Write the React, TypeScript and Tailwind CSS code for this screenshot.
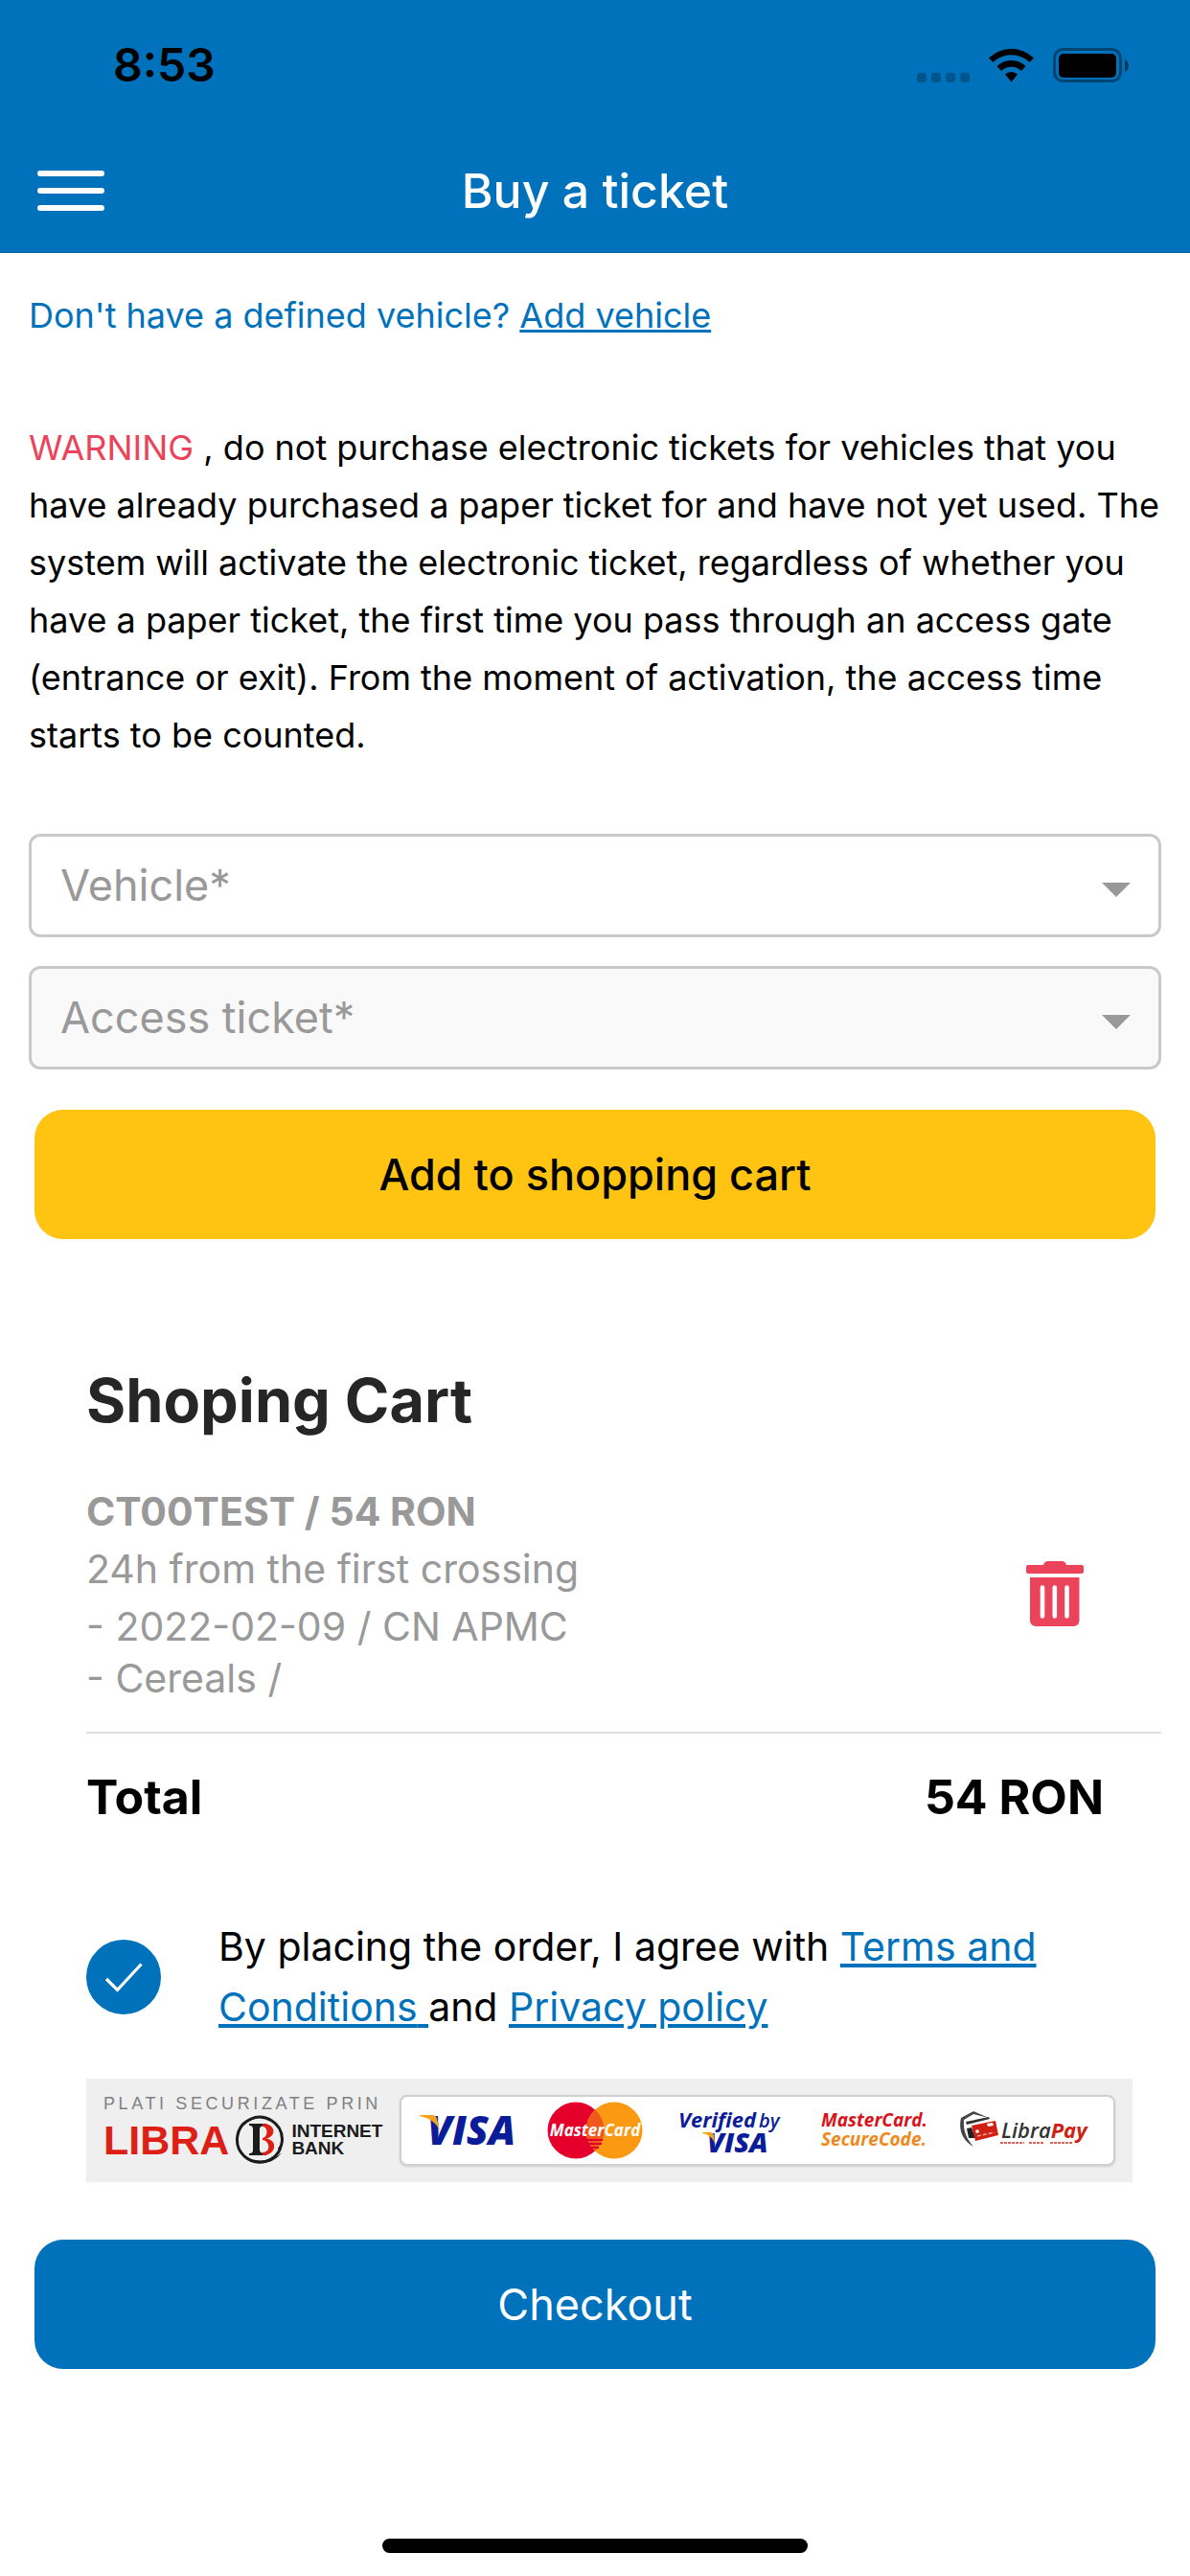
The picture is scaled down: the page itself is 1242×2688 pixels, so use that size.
import { useState } from "react"

interface CartItem {
  id: number
  plate: string
  price: number
  validity: string
  details: string[]
}

const initialItems: CartItem[] = [
  {
    id: 1,
    plate: "CT00TEST",
    price: 54,
    validity: "24h from the first crossing",
    details: ["- 2022-02-09 / CN APMC", "- Cereals /"],
  },
]

function StatusIcons() {
  return (
    <svg width="222" height="36" viewBox="0 0 222 36" aria-hidden="true">
      <g fill="#000" opacity="0.25">
        <rect x="0" y="26" width="10" height="10" rx="3" />
        <rect x="15" y="26" width="10" height="10" rx="3" />
        <rect x="30" y="26" width="10" height="10" rx="3" />
        <rect x="45" y="26" width="10" height="10" rx="3" />
      </g>
      {/* wifi */}
      <path d="M75 10.500A34 34 0 0 1 122 10.500L117.500 15A27 27 0 0 0 79.500 15Z" />
      <path d="M83.500 19A21.500 21.500 0 0 1 113.500 19L109 24A15 15 0 0 0 88 24Z" />
      <path d="M92 27.500A9.500 9.500 0 0 1 105 27.500L98.500 35.500Z" />
      {/* battery */}
      <rect x="143.500" y="1.500" width="69" height="33" rx="9" fill="none" stroke="#000" strokeOpacity="0.4" strokeWidth="3" />
      <rect x="148" y="6" width="60" height="25" rx="5" />
      <path d="M217 12C222 14 222 23 217 25Z" fillOpacity="0.5" />
    </svg>
  )
}

function SelectField({ id, label, disabled = false }: { id: string; label: string; disabled?: boolean }) {
  return (
    <div className="relative">
      <select
        id={id}
        aria-label={label}
        disabled={disabled}
        className="block w-full h-[108px] appearance-none rounded-xl border-3 border-[#c9c9c9] bg-white pl-[30px] pr-20 text-[45px] text-[#999] opacity-100 disabled:bg-[#f9f9f9]"
      >
        <option>{label}</option>
      </select>
      <div className="pointer-events-none absolute inset-y-0 right-8 flex items-center pt-2">
        <svg width="30" height="15" viewBox="0 0 30 15" aria-hidden="true">
          <path d="M0 0H30L15 15Z" fill="#999" />
        </svg>
      </div>
    </div>
  )
}

function TrashIcon() {
  return (
    <svg width="60" height="68" viewBox="0 0 60 68" aria-hidden="true">
      <path
        d="M2 4H18C19 1 20.500 0 22.500 0H37.500C39.500 0 41 1 42 4H58Q60 4 60 6V11Q60 13 58 13H2Q0 13 0 11V6Q0 4 2 4Z"
        fill="#eb445a"
      />
      <path d="M4 17H55.500V61.500Q55.500 68 49 68H10.500Q4 68 4 61.500Z" fill="#eb445a" />
      <path d="M17 27.500V57.500M29.800 27.500V57.500M42.500 27.500V57.500" stroke="#fff" strokeWidth="4.600" strokeLinecap="round" />
    </svg>
  )
}

function LibraEmblem() {
  return (
    <svg width="53" height="56" viewBox="0 0 53 56" aria-hidden="true">
      <path d="M48 36A23.500 23.500 0 1 1 49.500 27C49.500 31 48.500 35 46 38" fill="none" stroke="#1b1b1b" strokeWidth="3" />
      <path d="M11 46C22 56 40 54 49 41C40 50 25 52 11 46Z" fill="#1b1b1b" />
      <path d="M15 11H33V13C28 13 26 14 26 17V38C26 41 28 42 33 42V44H15V42C18 42 19 41 19 38V17C19 14 18 13 15 13Z" fill="#1b1b1b" />
      <path d="M29 11C44 11 43 25 33 26.500C45 28 44 44 29 44V41C38 41 37 29 29 28V26C35 25 35 14 29 14Z" fill="#dd1f16" />
    </svg>
  )
}

function VisaLogo() {
  return (
    <svg width="100" height="60" viewBox="0 0 100 60" role="img" aria-label="Visa">
      <text x="8" y="45" fontSize="42" fontWeight="800" fontStyle="italic" fill="#0a1c98" fontFamily="Open Sans, sans-serif">
        VISA
      </text>
      <path d="M0 14H13Q17 14 18 18L21 30C17 22 10 17 0 15Z" fill="#f6a21c" />
    </svg>
  )
}

function MasterCardLogo() {
  return (
    <svg width="100" height="60" viewBox="0 0 100 60" role="img" aria-label="MasterCard">
      <circle cx="30" cy="30" r="29.500" fill="#e4002b" />
      <circle cx="70" cy="30" r="29.500" fill="#fb9a12" />
      <path d="M50 8.300A29.500 29.500 0 0 1 50 51.700A29.500 29.500 0 0 1 50 8.300Z" fill="#ee5a1c" />
      <path d="M42 40H58M43 44H57M46 48H54" stroke="#e4002b" strokeWidth="2" />
      <text
        x="50"
        y="36"
        textAnchor="middle"
        fontSize="17"
        fontWeight="700"
        fontStyle="italic"
        fill="#fff"
        fontFamily="Open Sans, sans-serif"
      >
        MasterCard
      </text>
    </svg>
  )
}

function VerifiedByVisaLogo() {
  return (
    <svg width="112" height="68" viewBox="-4 -4 112 68" role="img" aria-label="Verified by Visa">
      <g fill="#0a1c98" fontStyle="italic" fontFamily="Open Sans, sans-serif">
        <text x="0" y="27" fontSize="22" fontWeight="700">
          Verified
        </text>
        <text x="84" y="27" fontSize="20" fontWeight="600">
          by
        </text>
        <text x="30" y="53" fontSize="29" fontWeight="800">
          VISA
        </text>
      </g>
      <path d="M25 32H34Q36 32 37 35L38 43C35 37 31 34 25 33Z" fill="#f6a21c" />
    </svg>
  )
}

function SecureCodeLogo() {
  return (
    <svg width="120" height="60" viewBox="0 0 120 60" role="img" aria-label="MasterCard SecureCode">
      <g fontSize="19" fontStyle="italic" fontFamily="Open Sans, sans-serif" fontWeight="700">
        <text x="9" y="26" fill="#d9131b">
          MasterCard.
        </text>
        <text x="9" y="46" fill="#ee8a1d">
          SecureCode.
        </text>
      </g>
    </svg>
  )
}

function LibraPayLogo() {
  return (
    <svg width="142" height="60" viewBox="0 0 142 60" role="img" aria-label="LibraPay">
      <path d="M31 17L15 10L2 17C-1 30 4 41 15 47C8 39 4 31 5 19L15 13Z" fill="#444" />
      <path d="M7 21L31 16L32 18L8 24Z" fill="#333" />
      <path d="M8 28L13 27L17 38L10 38Z" fill="#222" />
      <path d="M13 25L38 20L41 35L17 41Z" fill="#cf2012" />
      <path d="M29 23L35 22L36 25L30 26Z" fill="#fff" />
      <path d="M17 30L20 29L21 32L18 33Z" fill="#fff" />
      <path d="M19 36L37 32" stroke="#f3a59c" strokeWidth="1.500" strokeDasharray="4 2" />
      <text x="44" y="38" fontSize="22" fontStyle="italic" fontWeight="600" fill="#333" fontFamily="Open Sans, sans-serif">
        Libra
        <tspan fontWeight="700" fill="#cf2012">
          Pay
        </tspan>
      </text>
      <path d="M43 43H68M73 43H89M95 43H119" stroke="#d9655c" strokeWidth="2" strokeDasharray="3 1" />
    </svg>
  )
}

function PaymentBanner() {
  return (
    <div className="flex h-[108px] items-center bg-[#efefef] px-[18px] font-['Liberation_Sans',sans-serif]">
      <div className="w-[309px] shrink-0">
        <p className="text-[18px] leading-[20px] tracking-[0.2em] whitespace-nowrap text-[#808080]">PLATI SECURIZATE PRIN</p>
        <div className="flex items-center gap-1.5">
          <span className="text-[43px] leading-[56px] font-bold text-[#dd1f16]">LIBRA</span>
          <LibraEmblem />
          <span className="text-[19px] leading-[18px] font-bold text-[#1b1b1b]">
            INTERNET
            <br />
            BANK
          </span>
        </div>
      </div>
      <div className="flex h-[74px] flex-1 items-center justify-between rounded-lg border-2 border-[#d0d0d0] bg-white px-[19px] shadow-sm">
        <VisaLogo />
        <MasterCardLogo />
        <VerifiedByVisaLogo />
        <SecureCodeLogo />
        <LibraPayLogo />
      </div>
    </div>
  )
}

export default function App() {
  const [items, setItems] = useState<CartItem[]>(initialItems)
  const [agreed, setAgreed] = useState(true)

  const total = items.reduce((sum, item) => sum + item.price, 0)

  const removeItem = (id: number) => {
    setItems((prev) => prev.filter((item) => item.id !== id))
  }

  return (
    <div className="flex min-h-screen flex-col bg-white font-['Inter',sans-serif] text-black">
      <header className="border-b border-[#0063a5] bg-[#0072bc]">
        <div className="flex h-[135px] items-center justify-between pl-[118px] pr-[63px]">
          <span className="text-[48px] leading-[60px] font-semibold">8:53</span>
          <StatusIcons />
        </div>
        <div className="grid h-[128px] grid-cols-[1fr_auto_1fr] items-center px-[39px]">
          <button type="button" aria-label="Menu" className="flex w-[70px] flex-col gap-3">
            <span className="h-1.5 w-full rounded-full bg-white" />
            <span className="h-1.5 w-full rounded-full bg-white" />
            <span className="h-1.5 w-full rounded-full bg-white" />
          </button>
          <h1 className="text-[50px] leading-[60px] font-medium text-white">Buy a ticket</h1>
        </div>
      </header>

      <main className="px-[30px] pt-[35px]">
        <p className="text-[36px] leading-[60px] text-[#0072bc]">
          Don't have a defined vehicle?{" "}
          <a href="#add-vehicle" className="underline">
            Add vehicle
          </a>
        </p>

        <p className="mt-[78px] text-[36px] leading-[60px]">
          <span className="text-[#eb445a]">WARNING</span> , do not purchase electronic tickets for vehicles that you have
          already purchased a paper ticket for and have not yet used. The system will activate the electronic ticket,
          regardless of whether you have a paper ticket, the first time you pass through an access gate (entrance or
          exit). From the moment of activation, the access time starts to be counted.
        </p>

        <div className="mt-[73px] flex flex-col gap-[30px]">
          <SelectField id="vehicle" label="Vehicle*" />
          <SelectField id="ticket" label="Access ticket*" disabled />
        </div>

        <div className="mt-[42px] px-1.5">
          <button type="button" className="h-[135px] w-full rounded-[30px] bg-[#ffc312] text-[45px] font-medium">
            Add to shopping cart
          </button>
        </div>

        <section className="mt-[128px] pl-[60px]">
          <h2 className="text-[63px] leading-[80px] font-bold text-[#262626]">Shoping Cart</h2>

          <ul className="mt-[46px]">
            {items.map((item) => (
              <li
                key={item.id}
                className="flex items-center justify-between border-b-2 border-[#dedede] pr-[81px] pb-[29px] text-[41px] text-[#999]"
              >
                <div>
                  <p className="leading-[60px] font-bold">
                    {item.plate} / {item.price} RON
                  </p>
                  <p className="leading-[60px]">{item.validity}</p>
                  <div className="mt-[3px] leading-[54px]">
                    {item.details.map((line) => (
                      <p key={line}>{line}</p>
                    ))}
                  </div>
                </div>
                <button type="button" aria-label={`Remove ${item.plate}`} onClick={() => removeItem(item.id)}>
                  <TrashIcon />
                </button>
              </li>
            ))}
          </ul>

          <div className="mt-9 flex justify-between pr-[60px] text-[50px] leading-[60px] font-bold">
            <span>Total</span>
            <span>{total} RON</span>
          </div>

          <div className="mt-[95px] flex items-center gap-[60px]">
            <label htmlFor="agree" className="relative size-[78px] shrink-0 cursor-pointer">
              <input
                id="agree"
                type="checkbox"
                aria-label="I agree with the terms"
                checked={agreed}
                onChange={(e) => setAgreed(e.target.checked)}
                className="block size-[78px] appearance-none rounded-full border-3 border-[#0072bc] bg-white checked:bg-[#0072bc]"
              />
              {agreed && (
                <svg className="pointer-events-none absolute inset-0" width="78" height="78" viewBox="0 0 78 78" aria-hidden="true">
                  <path d="M21 41L32.500 52.500L57.500 25.500" fill="none" stroke="#fff" strokeWidth="3.200" />
                </svg>
              )}
            </label>
            <p className="flex-1 pr-[60px] text-[41px] leading-[63px]">
              By placing the order, I agree with{" "}
              <a href="#terms" className="text-[#0072bc] underline">
                Terms and Conditions{" "}
              </a>
              and{" "}
              <a href="#privacy" className="text-[#0072bc] underline">
                Privacy policy
              </a>
            </p>
          </div>

          <div className="mt-[43px] pr-[30px]">
            <PaymentBanner />
          </div>
        </section>

        <div className="mt-[60px] px-1.5">
          <button type="button" className="h-[135px] w-full rounded-[30px] bg-[#0072bc] text-[45px] text-white">
            Checkout
          </button>
        </div>
      </main>

      <div className="mt-auto flex justify-center pb-6">
        <div className="h-[15px] w-[444px] rounded-full bg-black" />
      </div>
    </div>
  )
}
